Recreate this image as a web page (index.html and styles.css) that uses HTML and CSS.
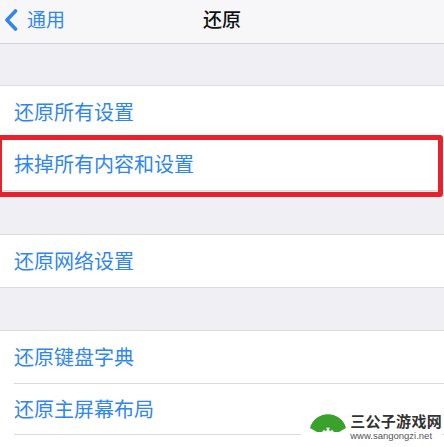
FILE: index.html
```html
<!DOCTYPE html>
<html lang="zh-CN">
<head>
    <meta charset="UTF-8">
    <meta name="viewport" content="width=device-width, initial-scale=1.0">
    <title>还原</title>
    <link rel="stylesheet" href="styles.css">
</head>
<body>

    <div class="screen">
        <div class="nav-bar">
            <a class="back" href="#">
                <svg class="chevron" width="14" height="22" viewBox="0 0 14 22">
                    <path d="M11.5 2 L3 11 L11.5 20" fill="none" stroke="#2f86ee" stroke-width="3.6" stroke-linecap="round" stroke-linejoin="round"/>
                </svg>
                <span>通用</span>
            </a>
            <div class="title">还原</div>
        </div>

        <div class="gap gap-top"></div>
        <div class="group">
            <div class="row">还原所有设置</div>
            <div class="row row-marked">
                抹掉所有内容和设置
                <div class="mark"></div>
            </div>
        </div>

        <div class="gap gap-mid"></div>
        <div class="group">
            <div class="row">还原网络设置</div>
        </div>

        <div class="gap"></div>
        <div class="group group-open">
            <div class="row">还原键盘字典</div>
            <div class="row">还原主屏幕布局</div>
        </div>

        <div class="watermark">
            <svg class="wm-logo" width="38" height="23" viewBox="0 0 38 23">
                <path d="M1 19 A18.5 18 0 0 1 37 19 L30 23 L8 23 Z" fill="#3aa12c"/>
                <path d="M13 23 Q19 14 25 23 Z" fill="#e9f3e6"/>
                <circle cx="16.5" cy="20.5" r="1.3" fill="#2f8d25"/>
                <circle cx="21.5" cy="20.5" r="1.3" fill="#2f8d25"/>
            </svg>
            <div class="wm-text">
                <div class="wm-name">三公子游戏网</div>
                <div class="wm-url">www.sangongzi.net</div>
            </div>
        </div>
    </div>

</body>
</html>
```

FILE: styles.css
```css
/* Page */
body {
    margin: 0;
    padding: 0;
    font-family: "Noto Sans CJK SC", "Noto Sans", sans-serif;
    background: #efeff4;
}

.screen {
    position: relative;
    width: 444px;
    height: 447px;
    overflow: hidden;
    background: #efeff4;
}

/* Navigation Bar */
.nav-bar {
    position: relative;
    height: 43px;
    background: #f7f7f9;
    border-bottom: 1px solid #d4d4d8;
    display: flex;
    align-items: center;
    justify-content: center;
}

.back {
    position: absolute;
    left: 4px;
    top: 0;
    height: 43px;
    display: flex;
    align-items: center;
    gap: 9px;
    color: #2f86ee;
    text-decoration: none;
    font-size: 19px;
}

.chevron {
    margin-top: -4px;
}

.back span {
    margin-top: -6px;
}

.title {
    font-size: 19px;
    font-weight: 500;
    color: #111;
    margin-top: -6px;
}

/* Sections */
.gap {
    height: 42px;
}

.gap-top {
    height: 41px;
}

.gap-mid {
    height: 43px;
}

.group {
    background: #fff;
    border-top: 1px solid #dcdce0;
    border-bottom: 1px solid #dcdce0;
}

.group-open {
    border-bottom: none;
    padding-bottom: 20px;
}

.row {
    position: relative;
    height: 52px;
    margin-left: 14px;
    display: flex;
    align-items: center;
    font-size: 20px;
    color: #2f86ee;
    padding-bottom: 2px;
    box-sizing: border-box;
}

.group .row + .row {
    border-top: 1px solid #d9d9dd;
}

.group-open .row:last-child {
    border-bottom: 1px solid #d9d9dd;
}

/* Red highlight box */
.row-marked {
    border-top: none !important;
}

.mark {
    position: absolute;
    left: -17px;
    right: 1px;
    top: -3px;
    bottom: -7px;
    border: 5px solid #e8212a;
    border-radius: 3px;
}

/* Watermark */
.watermark {
    position: absolute;
    right: 2px;
    bottom: 5px;
    display: flex;
    align-items: flex-end;
    gap: 3px;
    background: #fff;
    padding: 2px 0 0 8px;
}

.wm-logo {
    margin-bottom: 10px;
}

.wm-text {
    display: flex;
    flex-direction: column;
}

.wm-name {
    font-size: 15px;
    font-weight: 700;
    color: #333;
    line-height: 18px;
    letter-spacing: 0.3px;
}

.wm-url {
    font-family: "Liberation Sans", Arial, sans-serif;
    font-size: 9.5px;
    color: #555;
    line-height: 12px;
}
```
